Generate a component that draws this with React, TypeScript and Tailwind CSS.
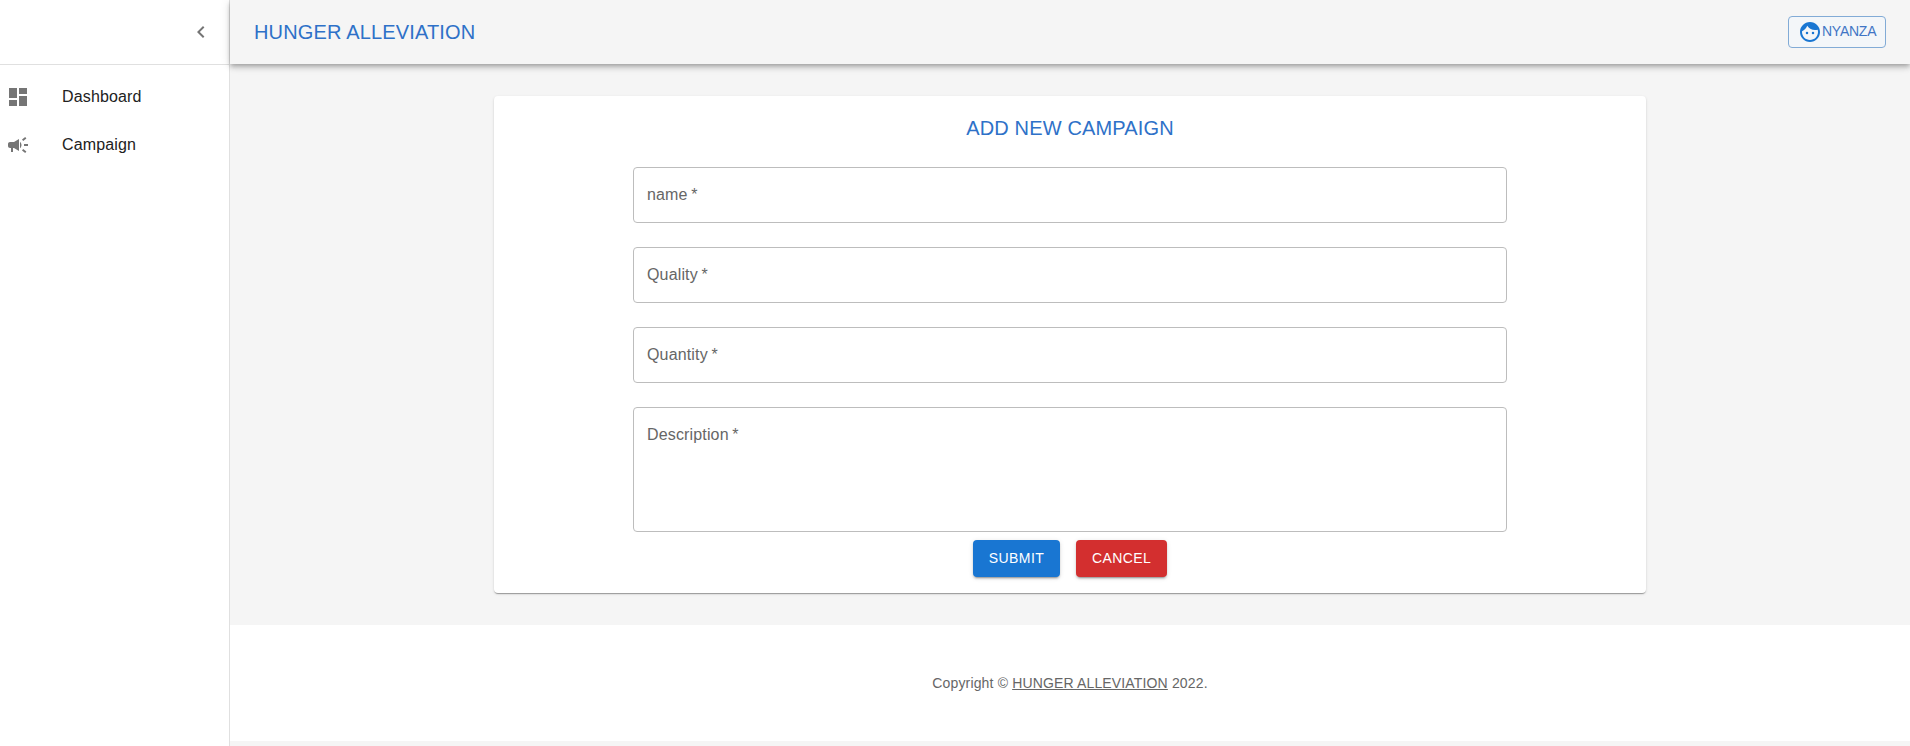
import React from "react";
import { MdCampaign, MdChevronLeft, MdDashboard, MdFace } from "react-icons/md";

const navItems = [
  { label: "Dashboard", Icon: MdDashboard },
  { label: "Campaign", Icon: MdCampaign },
];

const fields = ["name", "Quality", "Quantity"];

function Sidebar() {
  return (
    <aside className="flex w-[230px] shrink-0 flex-col border-r border-[#e0e0e0] bg-white">
      <div className="flex h-16 items-center justify-end px-2">
        <button className="p-2 text-[#757575]" aria-label="Collapse menu">
          <MdChevronLeft size={24} />
        </button>
      </div>
      <div className="h-px bg-[#e0e0e0]" />
      <nav className="flex flex-col pt-2">
        {navItems.map(({ label, Icon }) => (
          <a key={label} className="flex h-12 items-center pl-1.5">
            <span className="w-14 text-[#757575]">
              <Icon size={24} />
            </span>
            <span className="text-base tracking-[0.15px] text-[#212121]">{label}</span>
          </a>
        ))}
      </nav>
    </aside>
  );
}

function Header() {
  return (
    <header className="relative flex h-16 shrink-0 items-center justify-between bg-[#f5f5f5] px-6 shadow-[0_2px_4px_-1px_rgba(0,0,0,0.2),0_4px_5px_0_rgba(0,0,0,0.14),0_1px_10px_0_rgba(0,0,0,0.12)]">
      <h1 className="text-xl leading-8 tracking-[0.15px] text-[#2e71c8]">HUNGER ALLEVIATION</h1>
      <button className="flex h-8 w-[98px] items-center rounded border border-[#82abd6] bg-[#f3f6f9] pl-[9px] text-[#1976d2]">
        <MdFace size={24} />
        <span className="pb-0.5 text-sm tracking-[-0.25px] text-[#3f75c5]">NYANZA</span>
      </button>
    </header>
  );
}

function RequiredMark() {
  return <span className="-ml-px whitespace-pre"> *</span>;
}

function CampaignForm() {
  return (
    <section className="flex h-[497px] w-[1152px] flex-col items-center rounded bg-white pt-4 shadow-[0_2px_1px_-1px_rgba(0,0,0,0.2),0_1px_1px_0_rgba(0,0,0,0.14),0_1px_3px_0_rgba(0,0,0,0.12)]">
      <h2 className="text-xl leading-8 tracking-[0.15px] text-[#2e71c8]">ADD NEW CAMPAIGN</h2>
      <form className="mt-[23px] flex w-[874px] flex-col gap-6 text-base tracking-[0.15px] text-[#666666]">
        {fields.map((field) => (
          <label key={field} className="flex h-14 items-center rounded border border-[#bdbdbd] px-[13px]">
            {field}
            <RequiredMark />
          </label>
        ))}
        <label className="flex h-[125px] items-start rounded border border-[#bdbdbd] px-[13px] pt-[15px]">
          Description
          <RequiredMark />
        </label>
      </form>
      <div className="mt-2 flex gap-4 text-sm font-medium tracking-[0.4px] text-white">
        <button className="h-[37px] w-[87px] rounded bg-[#1976d2] pb-px shadow-[0_3px_1px_-2px_rgba(0,0,0,0.2),0_2px_2px_0_rgba(0,0,0,0.14),0_1px_5px_0_rgba(0,0,0,0.12)]">
          SUBMIT
        </button>
        <button className="h-[37px] w-[91px] rounded bg-[#d32f2f] pb-px shadow-[0_3px_1px_-2px_rgba(0,0,0,0.2),0_2px_2px_0_rgba(0,0,0,0.14),0_1px_5px_0_rgba(0,0,0,0.12)]">
          CANCEL
        </button>
      </div>
    </section>
  );
}

export default function App() {
  return (
    <div className="flex h-[746px] overflow-hidden bg-[#f5f5f5] font-['Liberation_Sans',Arial,sans-serif]">
      <Sidebar />
      <div className="flex min-w-0 grow flex-col">
        <Header />
        <main className="flex justify-center py-8">
          <CampaignForm />
        </main>
        <footer className="flex h-[116px] shrink-0 items-center justify-center bg-white text-sm tracking-[0.15px] text-[#666666]">
          <p>
            Copyright © <a className="underline">HUNGER ALLEVIATION</a> 2022.
          </p>
        </footer>
      </div>
    </div>
  );
}
